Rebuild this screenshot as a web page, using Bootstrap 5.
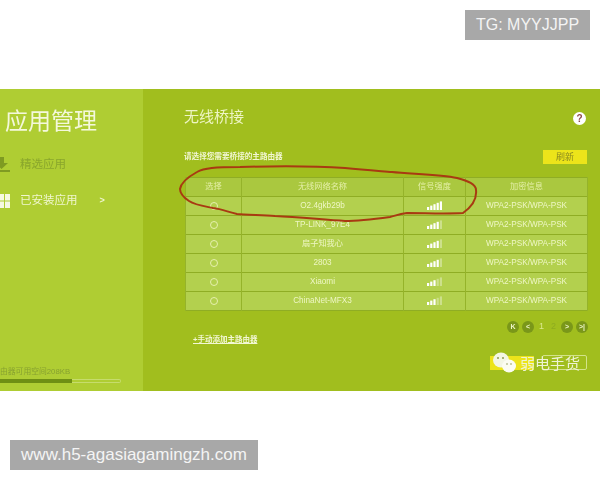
<!DOCTYPE html>
<html lang="zh">
<head>
  <meta charset="UTF-8">
  <meta name="viewport" content="width=device-width, initial-scale=1.0">
  <title>无线桥接</title>
  <link href="https://cdn.jsdelivr.net/npm/bootstrap@5.3.0/dist/css/bootstrap.min.css" rel="stylesheet">
  <style>
    html, body { height: 480px; overflow: hidden; }
    body { font-family: "Liberation Sans", "Noto Sans CJK SC", sans-serif; background: #fff; }
    .tag-box { background: #a8a8a8; color: #f4f4f4; font-family: "Liberation Sans", sans-serif; }
    .tag-top { width: 125px; height: 30px; margin: 10px 10px 0 0; font-size: 16px; }
    .tag-bottom { width: 248px; height: 30px; margin: 0 0 10px 10px; font-size: 17px; }
    .app-panel { height: 302px; margin-top: 49px; margin-bottom: 49px; background: #a1be1e; color: #fff; position: relative; overflow: hidden; filter: blur(.35px); }
    .side-col { width: 143px; background: #afcd33; flex: none; }
    .side-title { font-size: 23px; line-height: 30px; padding: 17px 0 0 5px; color: #f4f8dc; }
    .side-item { height: 36px; font-size: 11.500px; gap: 8px; color: #f0f6cf; }
    .side-item.dim { color: #8aa62c; margin-top: 11px; }
    .side-arrow { font-size: 9px; margin-left: 14px; font-weight: 700; }
    .side-foot { font-size: 7.800px; line-height: 9px; color: #87a130; margin-top: auto; white-space: nowrap; }
    .space-track { width: 121px; height: 4px; border: 1px solid #c6dc6c; border-left: 0; margin: 3px 0 8px; border-radius: 0 2px 2px 0; }
    .space-used { width: 72px; height: 4px; margin-top: -1px; background: #6f8f14; }
    .main-col { padding: 15px 13px 0 41px; min-width: 0; }
    .main-title { font-size: 15px; line-height: 26px; color: #eef5c4; }
    .help-dot { width: 13px; height: 13px; margin: 2px 1px 0 0; border-radius: 50%; background: #fff; color: #8d4b4b; font-size: 10px; font-weight: 700; line-height: 13px; text-align: center; }
    .hint-text { font-size: 7.600px; font-weight: 700; line-height: 10px; color: #f2f7d4; }
    .refresh-btn { width: 44px; height: 14px; padding: 0; border: 0; border-radius: 0; background: #ece41a; color: #8a8a20; font-size: 9px; line-height: 14px; }
    .hint-row { margin-top: 20px; height: 27px; padding-bottom: 13px; }
    .wifi-table { width: 402px; table-layout: fixed; margin: 0 0 0 1px; --bs-table-bg: transparent; --bs-table-color: #eef6c4; border-color: #8fad24; background: #b3d04e; font-size: 8.200px; }
    .wifi-table th, .wifi-table td { padding: 0; height: 19px; line-height: 18px; text-align: center; vertical-align: middle; font-weight: 400; border-color: #95b32a; }
    .wifi-table th { background: #aac83f; color: #e4efa8; }
    .radio-dot { display: inline-block; width: 8px; height: 8px; border: 1px solid #e6f0ae; border-radius: 50%; vertical-align: middle; }
    .page-dot { width: 12px; height: 12px; border-radius: 50%; background: #7a9719; color: #eef5c8; font-size: 7px; font-weight: 700; line-height: 12px; text-align: center; flex: none; }
    .page-num { width: 9px; text-align: center; font-size: 9px; color: #dbe98e; }
    .page-num.off { color: #8eab20; }
    .pager-row { margin: 10px -1px 0 0; gap: 3px; height: 12px; }
    .add-link { margin: 2px 0 0 9px; font-size: 7.500px; font-weight: 700; line-height: 10px; color: #f2f7d4; text-decoration: underline; }
    .save-row { position: absolute; left: 489px; top: 262px; width: 98px; height: 20px; }
    .save-btn { position: absolute; left: 1px; top: 5px; width: 44px; height: 14px; background: #ece41a; }
    .save-outline { position: absolute; left: 53px; top: 4px; width: 45px; height: 15px; border: 1px solid #d3e38a; border-radius: 2px; }
    .wx-text { position: absolute; left: 31px; top: 3px; font-size: 15px; line-height: 20px; color: #eef3d4; white-space: nowrap; }
    .ring-layer { position: absolute; left: 0; top: 0; pointer-events: none; }
    .wx-logo { position: absolute; left: 1px; top: -2px; }
  </style>
</head>
<body>
  <div class="d-flex flex-column" style="height:480px">
    <div class="d-flex justify-content-end">
      <div class="tag-box tag-top d-flex align-items-center justify-content-center">TG: MYYJJPP</div>
    </div>

    <div class="app-panel d-flex">
      <!-- 左侧菜单 -->
      <div class="side-col d-flex flex-column">
        <div class="side-title">应用管理</div>
        <div class="side-item dim d-flex align-items-center">
          <svg width="12" height="16" viewBox="0 0 12 16"><path d="M-1 0h5v6h4l-6.500 6L-5 6h4zM-2 13h12v2H-2z" fill="#7f9b22"/></svg>
          <span>精选应用</span>
        </div>
        <div class="side-item d-flex align-items-center">
          <svg width="12" height="16" viewBox="0 0 12 16"><path d="M-2 1h6v6.500H-2zM5 1h5v6.500H5zM-2 8.500h6V15H-2zM5 8.500h5V15H5z" fill="#f6f9e2"/></svg>
          <span>已安装应用</span><span class="side-arrow">&gt;</span>
        </div>
        <div class="side-foot">由器可用空间208KB
          <div class="space-track"><div class="space-used"></div></div>
        </div>
      </div>

      <!-- 主内容 -->
      <div class="main-col flex-grow-1">
        <div class="d-flex justify-content-between align-items-center">
          <div class="main-title">无线桥接</div>
          <div class="help-dot">?</div>
        </div>
        <div class="hint-row d-flex justify-content-between align-items-center">
          <span class="hint-text">请选择您需要桥接的主路由器</span>
          <button class="btn refresh-btn" type="button">刷新</button>
        </div>
        <table class="table table-bordered wifi-table">
          <colgroup><col style="width:56px"><col style="width:162px"><col style="width:62px"><col style="width:122px"></colgroup>
          <thead>
            <tr><th>选择</th><th>无线网络名称</th><th>信号强度</th><th>加密信息</th></tr>
          </thead>
          <tbody id="wifiRows"></tbody>
        </table>
        <div class="pager-row d-flex justify-content-end align-items-center">
          <span class="page-dot">K</span><span class="page-dot">&lt;</span>
          <span class="page-num">1</span><span class="page-num off">2</span>
          <span class="page-dot">&gt;</span><span class="page-dot">&gt;|</span>
        </div>
        <div class="add-link">+手动添加主路由器</div>
      </div>

      <div class="save-row">
        <div class="save-btn"></div>
        <div class="save-outline"></div>
        <svg class="wx-logo" width="30" height="30" viewBox="0 0 30 30">
          <ellipse cx="11" cy="11" rx="8" ry="7.500" fill="#f3f6e4"/>
          <ellipse cx="19" cy="17" rx="7" ry="6.500" fill="#fbfcf2"/>
          <circle cx="8" cy="9" r="1" fill="#8d9a50"/><circle cx="13" cy="9" r="1" fill="#8d9a50"/>
          <circle cx="17" cy="15" r=".8" fill="#8d9a50"/><circle cx="21" cy="15" r=".8" fill="#8d9a50"/>
        </svg>
        <div class="wx-text">弱电手货</div>
      </div>

      <!-- 红圈标记 -->
      <svg class="ring-layer" width="600" height="302" viewBox="0 89 600 302">
        <path d="M197 172C204 168 215 167 240 167C275 166 315 166 345 168C365 170 380 171 392 172C410 174 440 174 457 178C468 181 476 184 476 190C477 199 473 206 463 213C445 214 425 213 407 213C398 214 395 216 390 217C375 219 360 221 345 221C325 220 300 217 275 216C260 215 245 215 237 214C228 212 222 209 213 208C203 206 195 205 189 201C183 197 180 193 180 189C181 182 188 177 197 172" fill="none" stroke="#a83a12" stroke-width="2"/>
      </svg>
    </div>

    <div class="tag-box tag-bottom d-flex align-items-center justify-content-center">www.h5-agasiagamingzh.com</div>
  </div>

  <script src="https://cdn.jsdelivr.net/npm/bootstrap@5.3.0/dist/js/bootstrap.bundle.min.js"></script>
  <script>
  var wifiList = [
    ["O2.4gkb29b", 5], ["TP-LINK_97E4", 4], ["扇子知我心", 4],
    ["2803", 4], ["Xiaomi", 3], ["ChinaNet-MFX3", 3]
  ];

  function signalBars(level) {
    var out = '<svg width="16" height="9" viewBox="0 0 16 9">';
    for (var i = 0; i < 5; i++) {
      var h = 3 + i * 1.4;
      out += '<rect x="' + (i * 3.2) + '" y="' + (9 - h) + '" width="2.2" height="' + h + '" fill="#fff" opacity="' + (i < level ? 1 : 0.35) + '"/>';
    }
    return out + '</svg>';
  }

  var html = "";
  wifiList.forEach(function(w) {
    html += '<tr><td><span class="radio-dot"></span></td><td>' + w[0] + '</td><td>' + signalBars(w[1]) + '</td><td>WPA2-PSK/WPA-PSK</td></tr>';
  });
  document.getElementById('wifiRows').innerHTML = html;
  </script>
</body>
</html>
